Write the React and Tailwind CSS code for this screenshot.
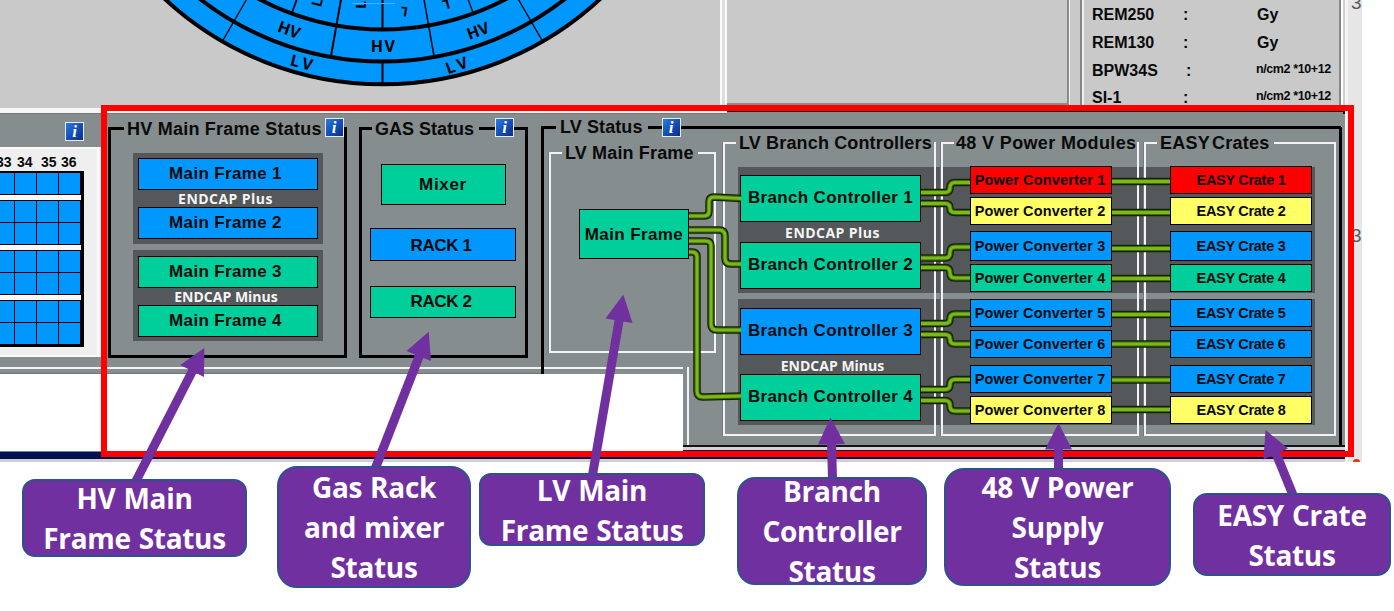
import React from "react";

const TONES = {
  blue: "bg-[#0098ff]",
  green: "bg-[#00ce9b]",
  red: "bg-[#ff0000]",
  yellow: "bg-[#ffff66]",
};

function InfoIcon({ className = "" }) {
  return (
    <span className={`flex h-[19px] w-[19px] shrink-0 items-center justify-center border border-[#e4ecf6] bg-linear-to-br from-[#2f7be0] via-[#1450b8] to-[#0a2f86] font-['Liberation_Serif',serif] text-[17px] leading-[17px] font-bold text-white italic ${className}`}>
      i
    </span>
  );
}

function Status({ tone, className, children }) {
  return (
    <div className={`flex shrink-0 items-center justify-center border border-black whitespace-nowrap ${TONES[tone]} ${className}`}>
      {children}
    </div>
  );
}

function BandLabel({ className = "", children }) {
  return (
    <div className={`flex items-center justify-center font-['Open_Sans',sans-serif] text-[14px] font-bold whitespace-nowrap text-[#f4f4f4] ${className}`}>
      {children}
    </div>
  );
}

function Group({ frame, legendClass, title, extra, className, children }) {
  return (
    <fieldset className={`${frame} ${className}`}>
      <legend className={`flex h-[20px] items-center text-[18px] leading-[20px] whitespace-nowrap ${legendClass}`}>
        {title}
        {extra}
      </legend>
      {children}
    </fieldset>
  );
}

const WHITE_FRAME = "border-2 border-[#f3f3f3] shadow-[-1px_0_0_#747b7c]";
const BLACK_FRAME = "border-3 border-black";

const CX = 382.5;
const CY = -236;
function Spoke({ deg, from, to, w = 2 }) {
  const a = (deg * Math.PI) / 180;
  return (
    <line
      x1={CX + from * Math.sin(a)}
      y1={CY + from * Math.cos(a)}
      x2={CX + to * Math.sin(a)}
      y2={CY + to * Math.cos(a)}
      stroke="#000"
      strokeWidth={w}
    />
  );
}

function Wheel() {
  return (
    <svg width="720" height="108" viewBox="0 0 720 108" className="block">
      <circle cx={CX} cy={CY} r="320.3" fill="#0098ff" stroke="#000" strokeWidth="4" />
      <circle cx={CX} cy={CY} r="297.5" fill="none" stroke="#000" strokeWidth="4" />
      <circle cx={CX} cy={CY} r="265.5" fill="none" stroke="#000" strokeWidth="4" />
      <Spoke deg={0} from={297} to={320} />
      <Spoke deg={-30} from={230} to={320} w={1.3} />
      <Spoke deg={30} from={230} to={320} w={1.3} />
      <Spoke deg={-10} from={230} to={297} />
      <Spoke deg={10} from={230} to={297} w={1.5} />
      <Spoke deg={0} from={230} to={265} />
      <Spoke deg={-20} from={230} to={265} w={1.8} />
      <Spoke deg={20} from={230} to={265} w={1.3} />
      <g fontFamily="Open Sans, sans-serif" fontSize="16" fontWeight="bold" textAnchor="middle" fill="#000" letterSpacing="1.5">
        <text x="383.5" y="51.5">HV</text>
        <text transform="translate(289 30) rotate(20)" y="5.5" letterSpacing="0">HV</text>
        <text transform="translate(478 31) rotate(-20)" y="5.5" letterSpacing="0">HV</text>
        <text transform="translate(303 63) rotate(14)" y="5.5" letterSpacing="3">LV</text>
        <text transform="translate(458 65) rotate(-20)" y="5.5" letterSpacing="3">LV</text>
      </g>
      <g fontFamily="Open Sans, sans-serif" fontSize="14" fontWeight="bold" textAnchor="middle" fill="#000">
        <text transform="translate(366 5) rotate(-88)">L</text>
        <text transform="translate(322 4) rotate(-76)">L</text>
        <text transform="translate(405 7) rotate(190)" fontSize="13">L</text>
        <text transform="translate(445 0) rotate(165)" fontSize="13">L</text>
      </g>
      <path d="M352 3.5H395" stroke="#4db2f4" strokeWidth="1" />
    </svg>
  );
}

const DOSES = [
  ["REM250", "w-[91px]", "w-[74px]", "Gy", "h-[28px]"],
  ["REM130", "w-[91px]", "w-[74px]", "Gy", "h-[28px]"],
  ["BPW34S", "w-[94px]", "w-[70px]", "n/cm2 *10+12", "h-[28px]"],
  ["SI-1", "w-[91px]", "w-[73px]", "n/cm2 *10+12", "h-[26px]"],
];

function TopRow() {
  return (
    <div className="flex h-[108px] bg-[#c8c9c8]">
      <Wheel />
      <div className="h-full w-[7px] border-r-2 border-l-2 border-[#fafafa] bg-[#dedede]" />
      <div className="h-[105px] w-[342px] border-r-2 border-b-2 border-r-[#8b8b8b] border-b-[#8b8b8b]" />
      <div className="flex w-[11px] border-l border-[#f5f5f5]" />
      <div className="w-[261px] overflow-hidden border-r-2 border-l-2 border-[#858585] pt-px pl-[10px] text-[16px] shadow-[inset_2px_0_0_#eee]">
        {DOSES.map(([name, w, gap, unit, h]) => (
          <div key={name} className={`flex items-center whitespace-nowrap ${h}`}>
            <span className={w}>{name}</span>
            <span className={gap}>:</span>
            <span className={unit === "Gy" ? "" : "pb-[3px] text-[12.5px] tracking-[-0.4px]"}>{unit}</span>
          </div>
        ))}
      </div>
      <div className="flex-1 border-l-2 border-white bg-[#cfcfcf]" />
    </div>
  );
}

function CellRow() {
  return (
    <div className="grid h-[21px] grid-cols-[14px_21px_21px_21px] gap-x-px">
      {[0, 1, 2, 3].map((i) => (
        <div key={i} className="bg-[#0098ff]" />
      ))}
    </div>
  );
}

function Separator() {
  return <div className="h-[5px] w-[81px] bg-[#fbf8f8]" />;
}

function Sectors() {
  return (
    <div className="w-[101px] shrink-0">
      <div className="flex h-[33px] items-center pl-[65px]">
        <InfoIcon className="-mb-px" />
      </div>
      <div className="h-[210px] border-y-2 border-r-4 border-y-[#fafafa] border-r-[#fafafa] bg-[#efefef]">
        <div className="flex h-[22px] items-center pt-[4px] text-[14px] tracking-[-0.1px]">
          <span className="-ml-[4px] w-[21px]">33</span>
          <span className="w-[24px]">34</span>
          <span className="w-[20px]">35</span>
          <span>36</span>
        </div>
        <div className="flex h-[176px] w-[84px] flex-col gap-px bg-black pt-[2px]">
          <CellRow />
          <Separator />
          <CellRow />
          <CellRow />
          <Separator />
          <CellRow />
          <CellRow />
          <Separator />
          <CellRow />
          <CellRow />
        </div>
      </div>
    </div>
  );
}

function HvStatus() {
  const btn = "h-[32px] w-[180px] pr-[5px] text-[17px] tracking-[0.35px]";
  return (
    <Group
      frame={BLACK_FRAME}
      className="mt-[4px] ml-[7px] h-[240px] w-[239px] shrink-0"
      title={<span className="relative top-px">HV Main Frame Status</span>}
      legendClass="ml-[13px] w-[220px] pl-[3px] tracking-[0.23px]"
      extra={<InfoIcon className="mb-[2px] ml-[3px]" />}
    >
      <div className="mt-[15px] ml-[22px] flex w-[190px] flex-col gap-[6px]">
        <div className="h-[91px] bg-[#55585a] px-[5px] pt-[5px]">
          <Status tone="blue" className={btn}>Main Frame 1</Status>
          <BandLabel className="h-[17px] pr-[5px] tracking-[0.45px]">ENDCAP Plus</BandLabel>
          <Status tone="blue" className={btn}>Main Frame 2</Status>
        </div>
        <div className="h-[91px] bg-[#55585a] px-[5px] pt-[6px]">
          <Status tone="green" className={btn}>Main Frame 3</Status>
          <BandLabel className="h-[17px] pr-[4px]">ENDCAP Minus</BandLabel>
          <Status tone="green" className={btn}>Main Frame 4</Status>
        </div>
      </div>
    </Group>
  );
}

function GasStatus() {
  return (
    <Group
      frame={BLACK_FRAME}
      className="mt-[4px] ml-[12px] h-[240px] w-[169px] shrink-0"
      title={<span className="relative top-px">GAS Status</span>}
      legendClass="ml-[10px] pl-[3px]"
      extra={
        <>
          <span className="ml-[5px] h-[3px] w-[16px] bg-black" />
          <InfoIcon className="mb-[2px]" />
        </>
      }
    >
      <div className="flex flex-col items-center pt-[26px] pr-px text-[17px]">
        <Status tone="green" className="h-[41px] w-[125px] tracking-[0.7px]">Mixer</Status>
        <Status tone="blue" className="mt-[23px] h-[33px] w-[146px] pt-[2px] pr-[4px] tracking-[-0.4px]">RACK 1</Status>
        <Status tone="green" className="mt-[25px] h-[32px] w-[146px] pr-[4px] tracking-[-0.4px]">RACK 2</Status>
      </div>
    </Group>
  );
}

const ROWS = [
  ["red", "h-[28px]"],
  ["yellow", "mt-[3px] h-[28px]"],
  ["blue", "mt-[6px] h-[30px]"],
  ["green", "mt-[3px] h-[28px]"],
  ["blue", "mt-[7px] h-[28px]"],
  ["blue", "mt-[3px] h-[28px]"],
  ["blue", "mt-[7px] h-[28px]"],
  ["yellow", "mt-[3px] h-[28px]"],
];

function Branches() {
  const btn = "h-[47px] w-[181px] pb-px text-[17px] tracking-[0.33px]";
  return (
    <Group
      frame={WHITE_FRAME}
      className="col-start-1 row-start-1 mt-[6px] h-[303px]"
      title="LV Branch Controllers"
      legendClass="ml-[11px] w-[198px] pl-[3px] tracking-[0.15px]"
    >
      <div className="ml-[15px] flex w-[181px] flex-col pt-[22px]">
        <Status tone="green" className={btn}>Branch Controller 1</Status>
        <BandLabel className="h-[20px] pl-[4px] tracking-[0.45px]">ENDCAP Plus</BandLabel>
        <Status tone="green" className={btn}>Branch Controller 2</Status>
        <Status tone="blue" className={`mt-[19px] ${btn}`}>Branch Controller 3</Status>
        <BandLabel className="h-[19px] pt-px pl-[4px]">ENDCAP Minus</BandLabel>
        <Status tone="green" className={btn}>Branch Controller 4</Status>
      </div>
    </Group>
  );
}

function PowerModules() {
  return (
    <Group
      frame={WHITE_FRAME}
      className="col-start-3 row-start-1 mt-[6px] h-[303px]"
      title="48 V Power Modules"
      legendClass="ml-[11px] w-[183px] pl-[2px] tracking-[0.35px]"
    >
      <div className="ml-[27px] pt-[13px]">
        {ROWS.map(([tone, cls], i) => (
          <Status key={i} tone={tone} className={`w-[142px] pt-px pr-[2px] text-[14.5px] tracking-[0.15px] ${cls}`}>
            Power Converter {i + 1}
          </Status>
        ))}
      </div>
    </Group>
  );
}

function Crates() {
  return (
    <Group
      frame={WHITE_FRAME}
      className="col-start-5 row-start-1 mt-[6px] h-[303px]"
      title="EASY Crates"
      legendClass="ml-[11px] w-[117px] pl-[3px] tracking-[0.25px] [word-spacing:-3px]"
    >
      <div className="ml-[24px] pt-[13px]">
        {ROWS.map(([tone, cls], i) => (
          <Status key={i} tone={tone} className={`w-[142px] pt-px text-[14.5px] tracking-[-0.3px] ${cls}`}>
            EASY Crate {i + 1}
          </Status>
        ))}
      </div>
    </Group>
  );
}

function LvStatus() {
  return (
    <div className="w-[804px] shrink-0">
      <div className="mt-[3px] flex h-[20px] items-center text-[18px] whitespace-nowrap">
        <span className="h-[3px] w-[15px] bg-black" />
        <span className="ml-[4px] tracking-[0.1px]">LV Status</span>
        <span className="ml-[5px] h-[3px] w-[14px] bg-black" />
        <InfoIcon />
        <span className="h-[3px] w-[660px] bg-black" />
      </div>
      <div className="-mt-[10px] flex h-[324px]">
        <div className="w-[182px]">
          <div className="flex h-[240px] border-l-3 border-black">
            <Group
              frame={WHITE_FRAME}
              className="mt-[16px] ml-[5px] h-[210px] w-[167px]"
              title="LV Main Frame"
              legendClass="ml-[11px] w-[136px] pl-[3px] tracking-[0.15px]"
            >
              <Status tone="green" className="mt-[46px] ml-[28px] h-[50px] w-[110px] pt-[2px] text-[17px] tracking-[0.4px]">
                Main Frame
              </Status>
            </Group>
          </div>
          <div className="flex h-[84px]">
            <div className="w-[142px]">
              <div className="flex h-[7px] border-l-3 border-black">
                <div className="h-[2px] flex-1 bg-[#f3f3f3]" />
              </div>
              <div className="h-[77px] bg-white" />
            </div>
            <div className="flex flex-1 flex-col">
              <div className="ml-[4px] h-[78px] border-l-2 border-[#f3f3f3]" />
              <div className="h-[2px] bg-[#151515]" />
              <div className="h-[3px] bg-[#d4d4d4]" />
              <div className="h-px bg-[#001050]" />
            </div>
          </div>
        </div>
        <div className="flex-1">
          <div className="grid h-[318px] w-[619px] grid-cols-[213px_5px_198px_5px_192px] grid-rows-[318px] border-r-3 border-black">
            <div className="col-span-5 col-start-1 row-start-1 mt-[40px] ml-[15px] flex w-[577px] flex-col gap-[6px]">
              <div className="h-[126px] bg-[#55585a]" />
              <div className="h-[126px] bg-[#55585a]" />
            </div>
            <Branches />
            <PowerModules />
            <Crates />
          </div>
          <div className="h-[2px] bg-[#151515]" />
          <div className="h-[3px] bg-[#d4d4d4]" />
          <div className="h-px bg-[#001050]" />
        </div>
      </div>
    </div>
  );
}

const CABLES = [
  "M689 216H704Q709 216 709 211V202Q709 197 714 197L741 198.5",
  "M689 230H719Q725 230 725 236V258Q725 264 731 264H741",
  "M689 241H706Q711 241 711 246V324Q711 330 717 330H741",
  "M689 252H692Q697 252 697 257V391Q697 397 703 397L741 396",
  "M921 192.5H945Q950 192.5 950 187.5Q950 182.5 955 182.5H970",
  "M921 203.5H945Q950 203.5 950 208Q950 212.5 955 212.5H970",
  "M921 258H945Q950 258 950 252.5Q950 247 955 247H970",
  "M921 267.5H945Q950 267.5 950 273Q950 278 955 278H970",
  "M921 323.5H945Q950 323.5 950 319Q950 314 955 314H970",
  "M921 334.5H945Q950 334.5 950 339Q950 344 955 344H970",
  "M921 389.5H945Q950 389.5 950 384.5Q950 379.5 955 379.5H970",
  "M921 400.5H945Q950 400.5 950 405.5Q950 411 955 411H970",
  "M1112 181.5H1170",
  "M1112 212.5H1170",
  "M1112 248.5H1170",
  "M1112 278.5H1170",
  "M1112 314.5H1170",
  "M1112 344H1170",
  "M1112 380H1170",
  "M1112 409.5H1170",
];

function Cables() {
  return (
    <svg className="pointer-events-none absolute top-0 left-0" width="1394" height="611" fill="none">
      {CABLES.map((d) => (
        <g key={d}>
          <path d={d} stroke="#17200b" strokeWidth="7.5" />
          <path d={d} stroke="#41690f" strokeWidth="5" />
          <path d={d} stroke="#7aba16" strokeWidth="3" />
        </g>
      ))}
    </svg>
  );
}

const ARROWS = [
  ["M136 481L194 368", "204.3,348 180.3,365 204,377"],
  ["M375.500 468L420 354", "428.7,331.7 406.5,351 431,361"],
  ["M592.500 475L619.500 318", "623.3,294.5 605.5,318.500 632.5,323"],
  ["M832.500 479L831.500 442", "830.5,417.5 818,444.5 845,444"],
  ["M1058.500 470V447", "1058.5,423 1045,449.5 1072,449.5"],
  ["M1293 495L1275 451", "1265.5,430 1263.5,459.5 1288,448.5"],
];

function Arrows() {
  return (
    <svg className="pointer-events-none absolute top-0 left-0" width="1394" height="611" fill="#7030a0">
      {ARROWS.map(([d, pts]) => (
        <g key={d}>
          <path d={d} stroke="#7030a0" strokeWidth="9" />
          <polygon points={pts} />
        </g>
      ))}
    </svg>
  );
}

const CALLOUTS = [
  ["top-[479px] left-[22px] h-[78px] w-[225px] rounded-[13px]", ["HV Main", "Frame Status"]],
  ["top-[466px] left-[277px] h-[122px] w-[194px] rounded-[20px]", ["Gas Rack", "and mixer", "Status"]],
  ["top-[473px] left-[479px] h-[73px] w-[226px] rounded-[12px]", ["LV Main", "Frame Status"]],
  ["top-[477px] left-[737px] h-[108px] w-[190px] rounded-[18px]", ["Branch", "Controller", "Status"]],
  ["top-[468px] left-[944px] h-[118px] w-[227px] rounded-[20px]", ["48 V Power", "Supply", "Status"]],
  ["top-[493px] left-[1193px] h-[83px] w-[198px] rounded-[14px]", ["EASY Crate", "Status"]],
];

export default function App() {
  return (
    <div className="relative h-[611px] w-[1394px] overflow-hidden bg-white font-['Liberation_Sans',sans-serif] font-bold text-[#0a0a0a]">
      <div className="flex h-[462px]">
        <div className="w-[1345px] shrink-0">
          <TopRow />
          <div className="flex h-[6px] bg-[#858d8e]">
            <div className="w-[727px] border-b border-[#777] bg-[#f6f6f6]" />
            <div className="mt-[2px] flex-1 border-t-2 border-r-2 border-[#151515]" />
          </div>
          <div className="flex h-[337px] bg-[#858d8e]">
            <div className="w-[541px] shrink-0">
              <div className="flex h-[253px]">
                <Sectors />
                <HvStatus />
                <GasStatus />
              </div>
              <div className="h-[7px] border-t-2 border-b border-t-[#f3f3f3] border-b-[#707677]" />
              <div className="h-[77px] bg-white" />
            </div>
            <LvStatus />
          </div>
          <div className="h-[8px] border-t border-[#6f7fb0] bg-[#001050]" />
          <div className="h-[3px] bg-[#cfcfcf]" />
        </div>
        <div className="flex h-full w-[17px] shrink-0 flex-col overflow-hidden border-l-3 border-[#f4f4f4] bg-[#e6e6e6] pl-[3px] text-[19px] leading-[20px] font-normal text-[#5a5a5a]">
          <span className="-mt-[7px] w-[20px]">3</span>
          <span className="mt-[213px] w-[20px]">3</span>
          <span className="mt-[213px] ml-[2px] h-[4px] w-[7px] rounded-t-full bg-[#d8401c]" />
        </div>
      </div>
      <Cables />
      <div className="absolute top-[105px] left-[101px] h-[352px] w-[1253px] border-6 border-[#ff0000]" />
      <Arrows />
      {CALLOUTS.map(([cls, lines]) => (
        <div
          key={lines.join(" ")}
          className={`absolute flex flex-col items-center justify-center border-2 border-[#2f528f] bg-[#7030a0] font-['Open_Sans',sans-serif] text-[28px] leading-[40px] font-bold tracking-[-0.3px] whitespace-nowrap text-white [word-spacing:1px] ${cls}`}
        >
          {lines.map((line) => (
            <span key={line} className="h-[40px] shrink-0">
              {line}
            </span>
          ))}
        </div>
      ))}
    </div>
  );
}
